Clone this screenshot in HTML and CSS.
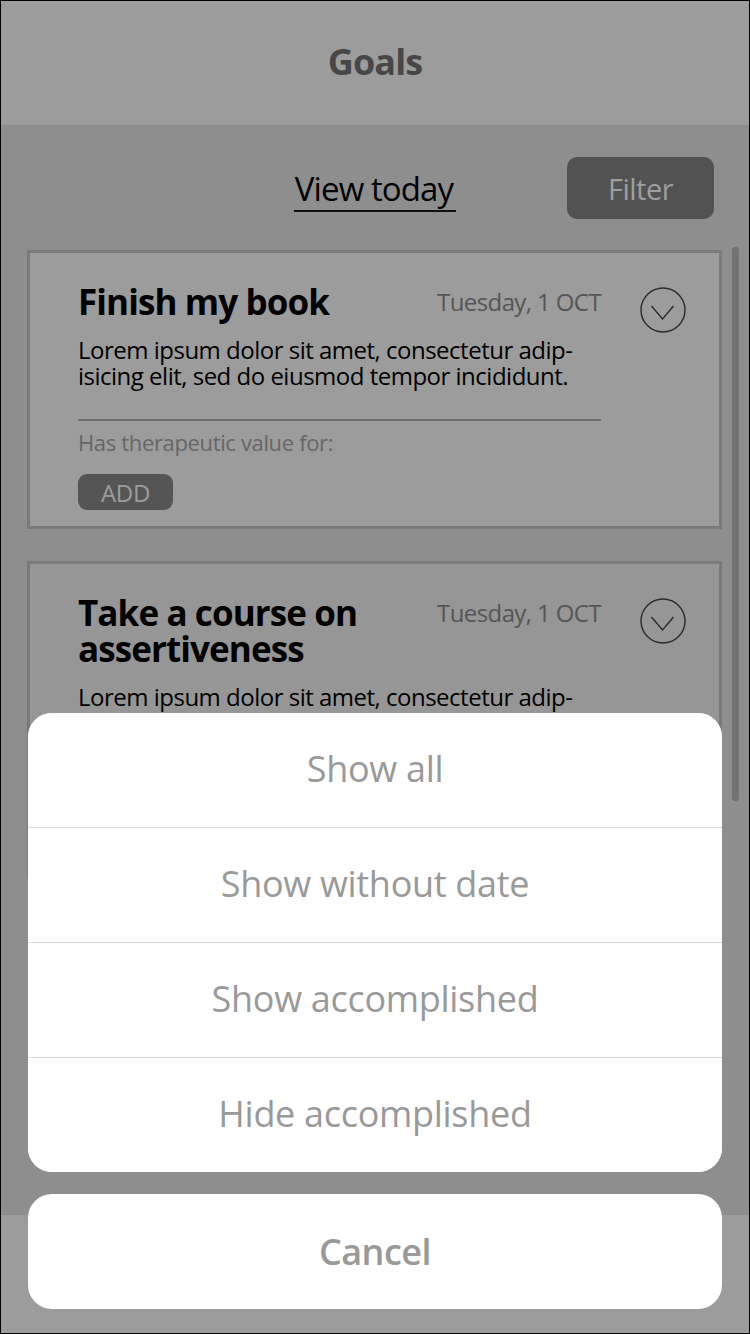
FILE: index.html
```html
<!DOCTYPE html>
<html lang="en">
<head>
<meta charset="utf-8">
<title>Goals</title>
<link rel="stylesheet" href="styles.css">
</head>
<body>
<div class="screen">
  <header class="topbar">
    <h1 class="title">Goals</h1>
  </header>

  <div class="toolbar">
    <span class="spacer"></span>
    <a class="view-today">View today</a>
    <button class="filter-btn">Filter</button>
  </div>

  <main class="list">
    <section class="card">
      <div class="card-main">
        <div class="card-head">
          <h2 class="card-title">Finish my book</h2>
          <span class="card-date">Tuesday, 1 OCT</span>
        </div>
        <p class="card-desc"><span class="line">Lorem ipsum dolor sit amet, consectetur adip-</span><span class="line">isicing elit, sed do eiusmod tempor incididunt.</span></p>
        <hr class="card-rule">
        <p class="card-label">Has therapeutic value for:</p>
        <button class="add-btn">ADD</button>
      </div>
      <svg class="chev" width="46" height="46" viewBox="0 0 46 46">
        <ellipse cx="23" cy="23" rx="22" ry="22" fill="none" stroke="#2b2b2b" stroke-width="1.4"/>
        <path d="M11.5 19 L22.5 32 L33.5 19" fill="none" stroke="#2b2b2b" stroke-width="1.4"/>
      </svg>
    </section>

    <section class="card">
      <div class="card-main">
        <div class="card-head">
          <h2 class="card-title"><span class="line">Take a course on</span><span class="line">assertiveness</span></h2>
          <span class="card-date">Tuesday, 1 OCT</span>
        </div>
        <p class="card-desc"><span class="line">Lorem ipsum dolor sit amet, consectetur adip-</span><span class="line">isicing elit, sed do eiusmod tempor incididunt.</span></p>
        <hr class="card-rule">
        <p class="card-label">Has therapeutic value for:</p>
        <button class="add-btn">ADD</button>
      </div>
      <svg class="chev" width="46" height="46" viewBox="0 0 46 46">
        <ellipse cx="23" cy="23" rx="22" ry="22" fill="none" stroke="#2b2b2b" stroke-width="1.4"/>
        <path d="M11.5 19 L22.5 32 L33.5 19" fill="none" stroke="#2b2b2b" stroke-width="1.4"/>
      </svg>
    </section>
  </main>

  <div class="scrollbar"></div>

  <footer class="tabbar"></footer>

  <div class="sheet">
    <div class="sheet-options">
      <button class="sheet-item">Show all</button>
      <button class="sheet-item">Show without date</button>
      <button class="sheet-item">Show accomplished</button>
      <button class="sheet-item">Hide accomplished</button>
    </div>
    <button class="sheet-cancel">Cancel</button>
  </div>
</div>
</body>
</html>
```

FILE: styles.css
```css
* { box-sizing: border-box; }

html, body {
  margin: 0;
  padding: 0;
  width: 750px;
  height: 1334px;
  overflow: hidden;
  background: #8e8e8e;
}

.screen {
  position: relative;
  width: 750px;
  height: 1334px;
  border: 1px solid #000;
  background: #8e8e8e;
  font-family: "Open Sans", "Noto Sans", sans-serif;
  display: flex;
  flex-direction: column;
  overflow: hidden;
}

.topbar {
  height: 124px;
  flex: none;
  background: #9c9c9c;
  display: flex;
  align-items: center;
  justify-content: center;
}

.title {
  margin: 0 0 3px;
  font-size: 36px;
  line-height: 44px;
  font-weight: 700;
  color: #474747;
  letter-spacing: -0.9px;
}

.toolbar {
  flex: none;
  display: grid;
  grid-template-columns: 1fr auto 1fr;
  align-items: start;
  padding: 32px 35px 0 35px;
  height: 125px;
}

.view-today {
  font-size: 33px;
  color: #000;
  letter-spacing: -0.9px;
  line-height: 36px;
  margin-top: 14px;
  padding: 0 3px 3px 1px;
  border-bottom: 2px solid #111;
}

.filter-btn {
  justify-self: end;
  width: 147px;
  height: 62px;
  border: none;
  border-radius: 10px;
  background: #525252;
  color: #9e9e9e;
  font-family: inherit;
  font-size: 29px;
  letter-spacing: -0.5px;
  padding: 0;
}

.list {
  flex: none;
  display: flex;
  flex-direction: column;
  gap: 32px;
  padding: 0 27px 0 26px;
}

.card {
  display: flex;
  align-items: flex-start;
  border: 3px solid #7a7a7a;
  background: #9c9c9c;
  padding: 31px 34px 16px 48px;
}

.card + .card {
  background: #969696;
}

.card-main {
  width: 523px;
  flex: none;
  display: flex;
  flex-direction: column;
  align-items: flex-start;
}

.chev {
  flex: none;
  margin: 3px 0 0 39px;
}

.line {
  display: block;
  white-space: nowrap;
}

.card-head {
  width: 100%;
  display: flex;
  justify-content: space-between;
  align-items: flex-start;
}

.card-title {
  margin: 0;
  font-size: 35px;
  line-height: 36px;
  font-weight: 700;
  color: #000;
  letter-spacing: -0.9px;
}

.card-date {
  font-size: 24px;
  line-height: 36px;
  color: #555;
  letter-spacing: -0.6px;
  margin-top: 0;
}

.card-desc {
  margin: 17px 0 0;
  font-size: 24px;
  line-height: 26px;
  color: #000;
  letter-spacing: -0.5px;
}

.card-rule {
  width: 100%;
  margin: 30px 0 0;
  border: none;
  border-top: 2px solid #6e6e6e;
  height: 0;
}

.card-label {
  margin: 7px 0 0;
  font-size: 22px;
  line-height: 28px;
  color: #666;
  letter-spacing: -0.35px;
}

.add-btn {
  margin-top: 18px;
  width: 95px;
  height: 36px;
  border: none;
  border-radius: 9px;
  background: #555;
  color: #9c9c9c;
  font-family: inherit;
  font-size: 24px;
  letter-spacing: -0.3px;
  padding: 0;
}

.scrollbar {
  position: absolute;
  left: 731px;
  top: 246px;
  width: 7px;
  height: 554px;
  border-radius: 4px;
  background: #727272;
}

.tabbar {
  margin-top: auto;
  height: 118px;
  flex: none;
  background: #9c9c9c;
}

.sheet {
  position: absolute;
  left: 27px;
  right: 27px;
  bottom: 24px;
  display: flex;
  flex-direction: column;
  gap: 22px;
}

.sheet-options {
  height: 459px;
  display: flex;
  flex-direction: column;
  background: #fff;
  border-radius: 24px;
  overflow: hidden;
}

.sheet-item {
  flex: 1;
  border: none;
  background: #fff;
  font-family: inherit;
  font-size: 36px;
  color: #999;
  letter-spacing: -0.3px;
  padding: 0 0 4px;
}

.sheet-item + .sheet-item {
  border-top: 1px solid #d9d9d9;
}

.sheet-cancel {
  height: 115px;
  border: none;
  border-radius: 24px;
  background: #fff;
  font-family: inherit;
  font-size: 36px;
  font-weight: 600;
  color: #999;
  letter-spacing: -0.5px;
  padding: 0;
}
```
